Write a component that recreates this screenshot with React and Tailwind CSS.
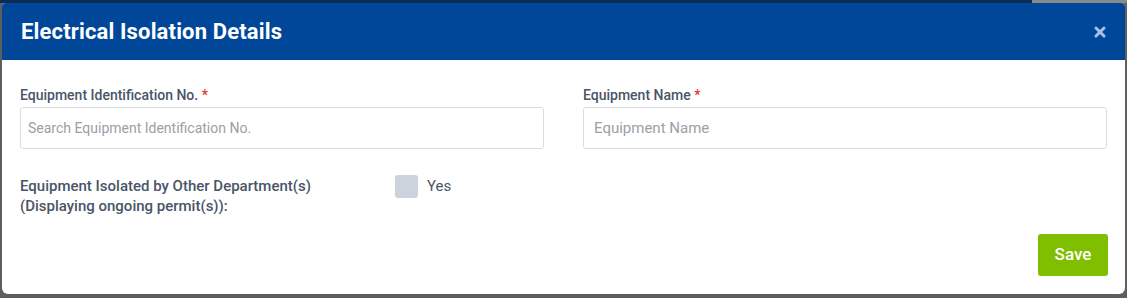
import { X } from 'lucide-react';

function Field({ label, placeholder, inputClass }) {
  return (
    <div className="flex flex-col">
      <label className="h-5 text-[14px] font-medium leading-5 text-[#4a5568]">
        {label} <span className="text-[#e3342f]">*</span>
      </label>
      <input
        className={`mt-[2px] h-[42px] rounded-[3px] border border-[#d9dde3] bg-white text-[#333] placeholder:text-[#9aa0a6] outline-none ${inputClass}`}
        placeholder={placeholder}
      />
    </div>
  );
}

export default function App() {
  return (
    <div className="flex h-[298px] w-[1127px] flex-col bg-[#5e5e5e] font-['Roboto',sans-serif]">
      <div className="flex h-[3px] shrink-0">
        <div className="flex-1 bg-[#0c2b55]" />
        <div className="w-[95px] bg-[#8a8a8a]" />
      </div>
      <div className="mx-[2px] flex h-[291px] flex-col overflow-hidden rounded-b-md rounded-t-[4px] bg-white">
        <div className="flex h-[57px] shrink-0 items-center justify-between bg-[#00479a] pl-[19px] pr-[17px]">
          <h1 className="text-[22px] font-bold tracking-[0.15px] text-white">Electrical Isolation Details</h1>
          <X className="h-[16px] w-[16px] text-[#a9c1e2]" strokeWidth={4.5} />
        </div>
        <div className="flex flex-1 flex-col px-[18px] pt-[25px]">
          <div className="grid grid-cols-2 gap-x-[39px]">
            <Field
              label="Equipment Identification No."
              placeholder="Search Equipment Identification No."
              inputClass="px-[7px] text-[14px]"
            />
            <Field label="Equipment Name" placeholder="Equipment Name" inputClass="px-[10px] text-[15px]" />
          </div>
          <div className="mt-[27px] flex items-start">
            <p className="w-[375px] text-[15px] font-medium leading-5 text-[#4a5568]">
              Equipment Isolated by Other Department(s)
              <br />
              (Displaying ongoing permit(s)):
            </p>
            <label className="-mt-[1px] flex items-center gap-[9px]">
              <span className="h-[23px] w-[23px] rounded-[3px] bg-[#cbd3dd]" />
              <span className="text-[15px] text-[#4a5568]">Yes</span>
            </label>
          </div>
          <div className="mt-[18px] flex justify-end">
            <button className="mr-[-1px] h-[42px] w-[70px] rounded-[3px] bg-[#80bf00] text-[17px] font-medium text-white">
              Save
            </button>
          </div>
        </div>
      </div>
    </div>
  );
}
